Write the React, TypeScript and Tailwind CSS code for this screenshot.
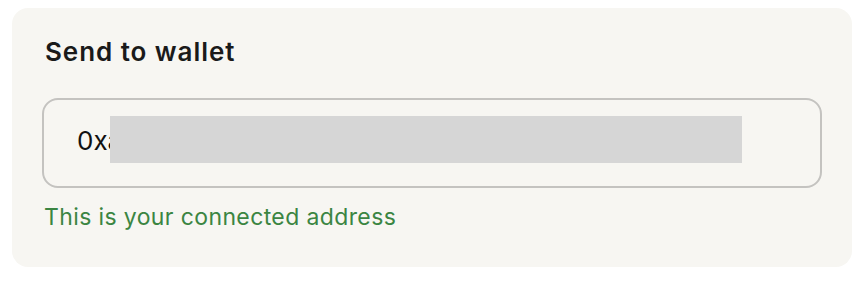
import React from "react";

export default function App() {
  return (
    <div className="w-[868px] h-[286px] bg-white pt-[8px] pl-[12px]" style={{ fontFamily: "Inter, 'Noto Sans', sans-serif" }}>
      <div className="w-[840px] h-[259px] rounded-[16px] bg-[#f7f6f2] px-[30px] pt-[28px]">
        <h2 className="text-[26px] leading-[32px] font-semibold text-[#1a1a1a] pl-[3px] tracking-[0.95px]">Send to wallet</h2>
        <div className="mt-[30px] h-[90px] rounded-[16px] border-2 border-[#c4c3c0] pl-[33px] pt-[16px]">
          <div className="relative h-[47px]">
            <span className="block pt-[9px] text-[26px] leading-[32px] text-[#111]">0xa</span>
            <div className="absolute left-[33px] top-0 w-[632px] h-[47px] bg-[#d6d6d6]" />
          </div>
        </div>
        <p className="mt-[15px] text-[23px] leading-[28px] text-[#3b8542] pl-[2px] tracking-[0.38px]">This is your connected address</p>
      </div>
    </div>
  );
}
